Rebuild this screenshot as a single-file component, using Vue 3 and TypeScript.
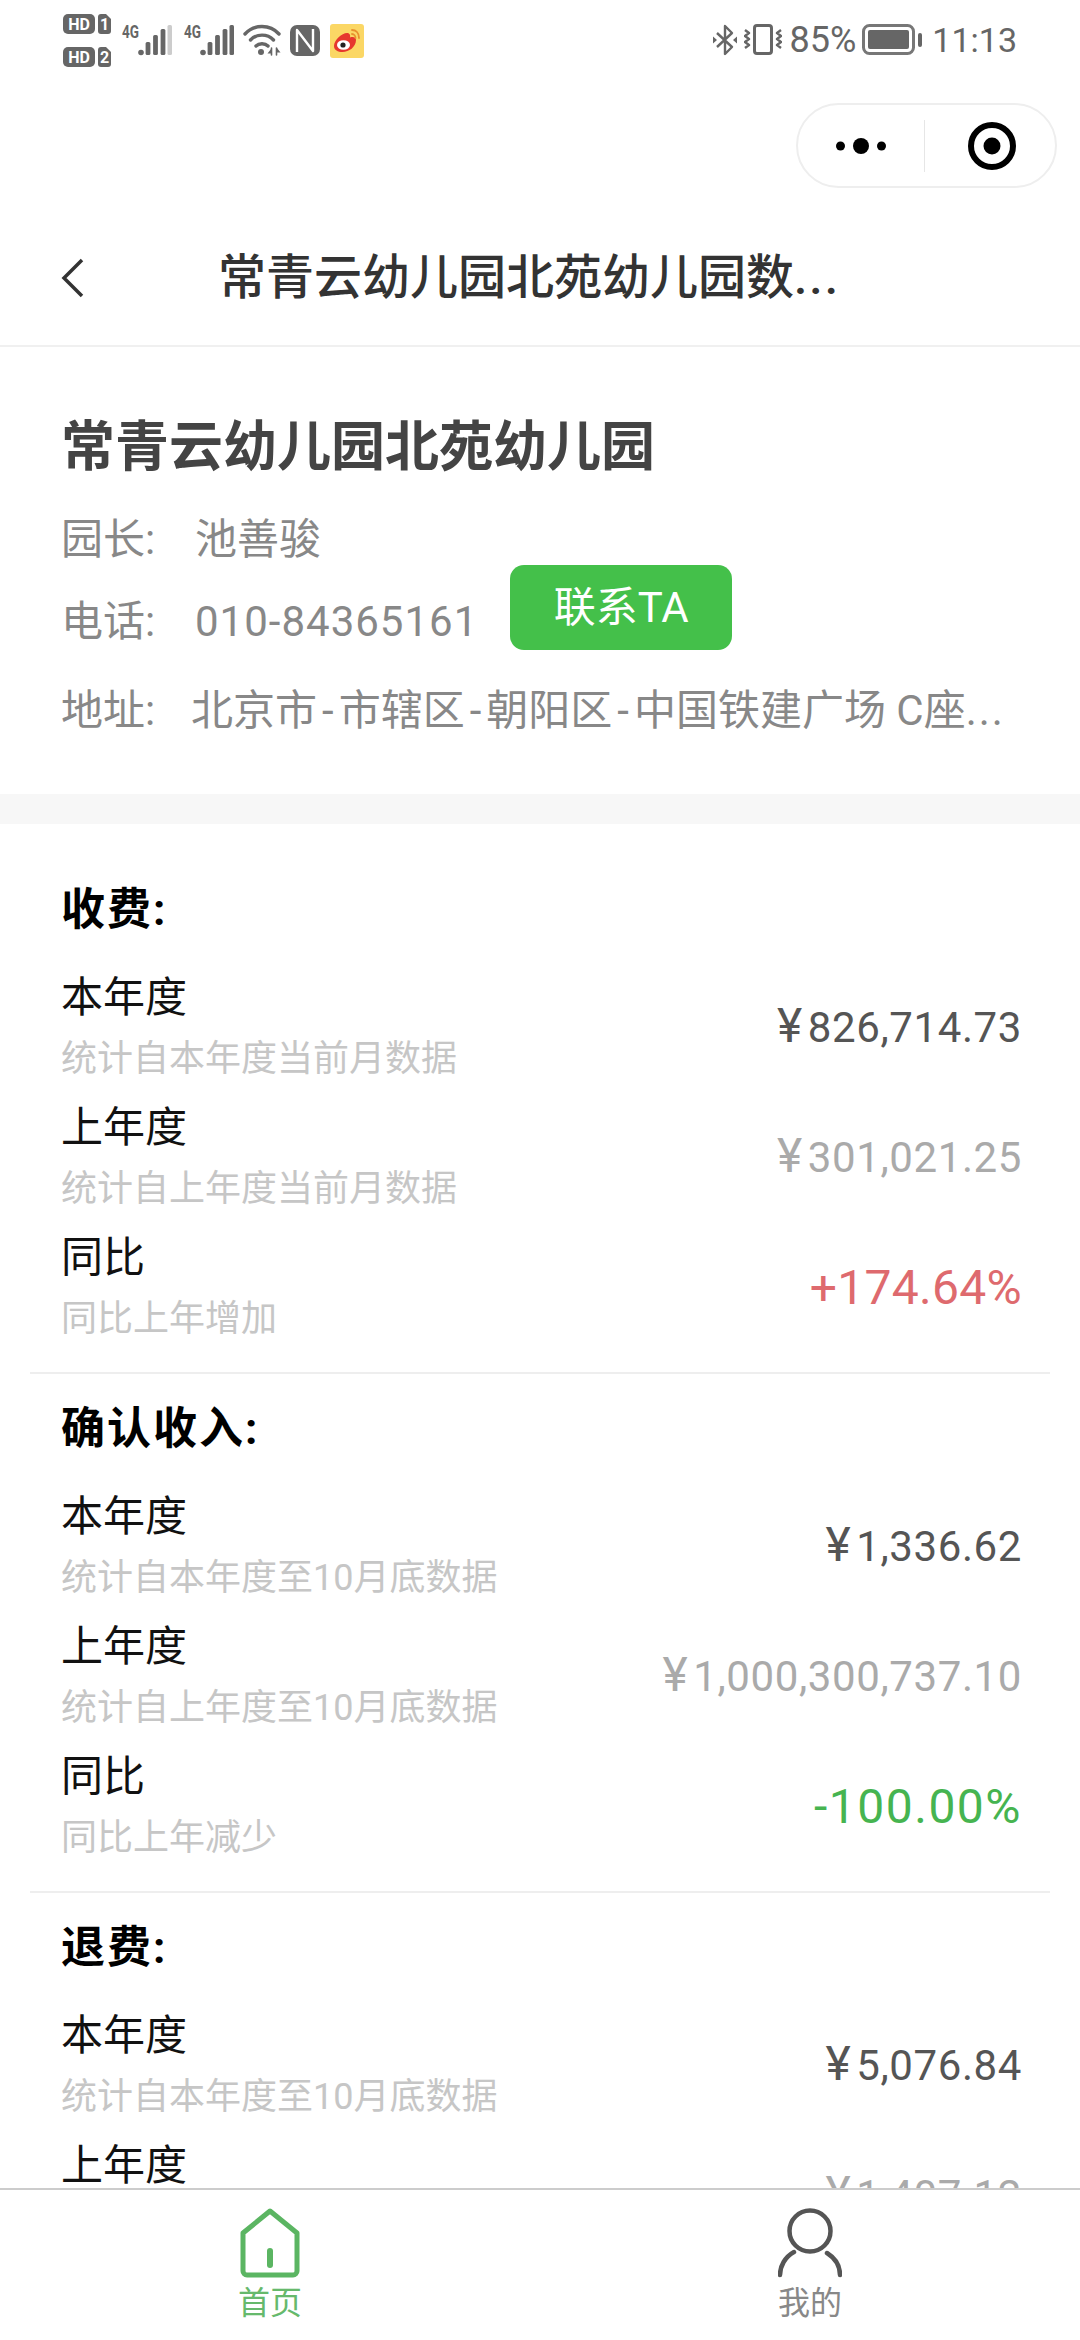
<script setup lang="ts">
interface Row {
  label: string
  sub: string
  value: string
  yen?: boolean
  kind?: 'muted' | 'up' | 'down'
}
interface Section {
  title: string
  rows: Row[]
}

const sections: Section[] = [
  {
    title: '收费:',
    rows: [
      { label: '本年度', sub: '统计自本年度当前月数据', value: '826,714.73', yen: true },
      { label: '上年度', sub: '统计自上年度当前月数据', value: '301,021.25', yen: true, kind: 'muted' },
      { label: '同比', sub: '同比上年增加', value: '+174.64%', kind: 'up' },
    ],
  },
  {
    title: '确认收入:',
    rows: [
      { label: '本年度', sub: '统计自本年度至10月底数据', value: '1,336.62', yen: true },
      { label: '上年度', sub: '统计自上年度至10月底数据', value: '1,000,300,737.10', yen: true, kind: 'muted' },
      { label: '同比', sub: '同比上年减少', value: '-100.00%', kind: 'down' },
    ],
  },
  {
    title: '退费:',
    rows: [
      { label: '本年度', sub: '统计自本年度至10月底数据', value: '5,076.84', yen: true },
      { label: '上年度', sub: '统计自上年度至10月底数据', value: '1,407.12', yen: true, kind: 'muted' },
    ],
  },
]

const signalBars = [
  { x: 26, y: 18, h: 13 },
  { x: 33.5, y: 11, h: 20 },
  { x: 41, y: 5, h: 26 },
]

const addressParts = ['北京市', '市辖区', '朝阳区', '中国铁建广场 C座']
</script>

<template>
  <div class="page">
    <div class="status">
      <div class="status-left">
        <div class="hd-stack">
          <svg v-for="n in 2" :key="n" width="48" height="20" viewBox="0 0 48 20">
            <rect x="0" y="0" width="32" height="20" rx="5" fill="#666" />
            <text x="16" y="15.5" class="hd-text" text-anchor="middle">HD</text>
            <path d="M35 3a3 3 0 0 1 3-3h5l5 5v12a3 3 0 0 1-3 3h-7a3 3 0 0 1-3-3z" fill="#666" />
            <text x="41.5" y="15.5" class="hd-text" text-anchor="middle">{{ n }}</text>
          </svg>
        </div>
        <svg v-for="n in 2" :key="'sig' + n" class="signal" width="50" height="32" viewBox="0 0 50 32">
          <text x="0" y="14" class="net-text" textLength="17" lengthAdjust="spacingAndGlyphs">4G</text>
          <circle cx="19" cy="28.5" r="2.8" fill="#666" />
          <rect v-for="b in signalBars" :key="b.x" :x="b.x - 2.4" :y="b.y" width="4.8" :height="b.h" rx="1.5" fill="#666" />
          <rect x="45.5" y="1" width="4.5" height="30" rx="1.5" :fill="n === 1 ? '#ccc' : '#666'" />
        </svg>
        <svg class="wifi" width="38" height="32" viewBox="0 0 38 32" fill="none" stroke="#666" stroke-width="3.4" stroke-linecap="round">
          <path d="M2 10C11 0 27 0 36 10" />
          <path d="M7.5 16C13.5 9.5 24.5 9.5 30.5 16" />
          <path d="M13 22c3-3 9-3 12 0" />
          <circle cx="18" cy="28" r="3" fill="#666" stroke="none" />
          <path d="M28.500 24v7M33.500 24v7" stroke-width="1.600" />
          <path d="M28 25l-3.500 4.500h4zM34 24l3.500 4.500h-4z" fill="#666" stroke="none" />
        </svg>
        <svg class="nfc" width="30" height="31" viewBox="0 0 30 31">
          <rect width="30" height="31" rx="7" fill="#666" />
          <path d="M7 27V5l16 21V4" fill="none" stroke="#fff" stroke-width="2.400" stroke-linejoin="round" />
        </svg>
        <svg class="weibo" width="34" height="34" viewBox="0 0 34 34">
          <rect width="34" height="34" rx="3" fill="#fbd765" />
          <path d="M4 22c0-6 8-13 13-13 3 0 3.500 2.500 3 4.500 3-1 6-.5 6 2.500C26 23 19 28 12.500 28 8 28 4 26 4 22z" fill="#e6372e" />
          <ellipse cx="13.500" cy="21" rx="6.500" ry="4.800" fill="#fff" />
          <circle cx="13" cy="21" r="2.600" fill="#222" />
          <path d="M22 6c4 0 7 3 7 8M22 10c2 0 3.500 2 3.500 4" fill="none" stroke="#e8912e" stroke-width="1.800" stroke-linecap="round" />
        </svg>
      </div>
      <div class="status-right">
        <svg width="24" height="32" viewBox="0 0 24 32" fill="none" stroke="#666" stroke-width="2.400" stroke-linejoin="round">
          <path d="M4 9l15 14-7 7V2l7 7L4 23" />
          <path d="M0 12.500l4 3.500-4 3.500zM24 12.500l-4 3.500 4 3.500z" fill="#666" stroke="none" />
        </svg>
        <svg class="vibrate" width="38" height="31" viewBox="0 0 38 31" fill="none" stroke="#666" stroke-width="2.400">
          <rect x="10.500" y="1.500" width="17" height="28" rx="2.500" stroke-width="3" />
          <path d="M1 6l4 3-4 3 4 3-4 3 4 3-4 3M37 6l-4 3 4 3-4 3 4 3-4 3 4 3" stroke-linejoin="round" />
        </svg>
        <span class="percent">85%</span>
        <svg class="battery" width="60" height="31" viewBox="0 0 60 31">
          <rect x="1.500" y="1.500" width="50" height="28" rx="6" fill="none" stroke="#777" stroke-width="3" />
          <rect x="6" y="6" width="41" height="19" rx="2" fill="#666" />
          <rect x="56" y="9" width="4" height="14" rx="2" fill="#666" />
        </svg>
        <span class="clock">11:13</span>
      </div>
    </div>

    <div class="capsule-row">
      <div class="capsule">
        <div class="capsule-cell">
          <svg width="50" height="18" viewBox="0 0 50 18" fill="#000">
            <circle cx="4.500" cy="9" r="4.500" />
            <circle cx="25" cy="9" r="8" />
            <circle cx="45.500" cy="9" r="4.500" />
          </svg>
        </div>
        <div class="capsule-line"></div>
        <div class="capsule-cell target">
          <svg width="48" height="48" viewBox="0 0 48 48">
            <circle cx="24" cy="24" r="21" fill="none" stroke="#000" stroke-width="6" />
            <circle cx="24" cy="24" r="8.500" fill="#000" />
          </svg>
        </div>
      </div>
    </div>

    <div class="nav">
      <svg class="back" width="24" height="40" viewBox="0 0 24 40" fill="none" stroke="#333" stroke-width="3.500">
        <path d="M21 2L3 20l18 18" />
      </svg>
      <div class="nav-title">常青云幼儿园北苑幼儿园数<span class="dots">...</span></div>
    </div>

    <div class="content">
      <div class="info">
        <div class="school">常青云幼儿园北苑幼儿园</div>
        <div class="info-row">
          <span class="info-label">园长:</span>
          <span>池善骏</span>
        </div>
        <div class="info-row phone">
          <span class="info-label">电话:</span>
          <span class="phone-num">010-84365161</span>
          <button class="contact">联系TA</button>
        </div>
        <div class="info-row address">
          <span class="address-label">地址:</span>
          <template v-for="(part, i) in addressParts" :key="part">
            <span v-if="i > 0" class="dash">-</span>{{ part }}
          </template><span class="dots">...</span>
        </div>
      </div>
      <div class="band"></div>

      <div class="stats">
        <section v-for="section in sections" :key="section.title" class="section">
          <h3 class="section-title">{{ section.title }}</h3>
          <div class="rows">
            <div v-for="row in section.rows" :key="row.label" class="row">
              <div>
                <div class="row-label">{{ row.label }}</div>
                <div class="row-sub">{{ row.sub }}</div>
              </div>
              <div class="row-value" :class="row.kind">
                <span v-if="row.yen" class="yen">¥</span>{{ row.value }}
              </div>
            </div>
          </div>
        </section>
      </div>
    </div>

    <div class="tabbar">
      <div class="tab active">
        <svg width="60" height="70" viewBox="0 0 60 70" fill="none" stroke="#5bb562" stroke-width="5" stroke-linejoin="round" stroke-linecap="round">
          <path d="M30 3L57 25V63a4 4 0 0 1-4 4H7a4 4 0 0 1-4-4V25z" />
          <path d="M30 43V57" stroke-width="6" />
        </svg>
        <span>首页</span>
      </div>
      <div class="tab">
        <svg width="64" height="70" viewBox="0 0 64 70" fill="none" stroke="#555" stroke-width="4.500" stroke-linecap="round">
          <circle cx="32" cy="23" r="20.500" />
          <path d="M16 44C7 49 2 58 2 67" />
          <path d="M49 45C57 50 62 58 62 67" />
        </svg>
        <span>我的</span>
      </div>
    </div>
  </div>
</template>

<style scoped>
.page {
  display: flex;
  flex-direction: column;
  width: 1080px;
  height: 2340px;
  overflow: hidden;
  background: #fff;
  font-family: Roboto, "Noto Sans CJK SC", sans-serif;
}

.status {
  display: flex;
  justify-content: space-between;
  height: 80px;
  padding: 14px 63px 0 63px;
  box-sizing: border-box;
  color: #666;
}
.status-left,
.status-right {
  display: flex;
  align-items: flex-start;
}
.hd-stack {
  display: flex;
  flex-direction: column;
  gap: 13px;
  width: 48px;
}
.hd-stack svg,
.signal {
  overflow: visible;
}
.hd-text {
  font: 700 16px Roboto, sans-serif;
  fill: #fff;
}
.net-text {
  font: 700 18px Roboto, sans-serif;
  fill: #666;
}
.signal {
  margin: 10px 0 0 11px;
}
.signal + .signal {
  margin-left: 12px;
}
.wifi {
  margin: 10px 0 0 9px;
}
.nfc {
  margin: 11px 0 0 9px;
}
.weibo {
  margin: 10px 0 0 10px;
}
.status-right {
  padding-top: 10px;
}
.vibrate {
  margin-left: 7px;
}
.percent {
  margin-left: 7px;
  font-size: 36px;
  line-height: 32px;
}
.battery {
  margin-left: 6px;
}
.clock {
  margin-left: 10px;
  font-size: 34px;
  line-height: 32px;
}

.capsule-row {
  display: flex;
  justify-content: flex-end;
  padding: 23px 23px 0 0;
}
.capsule {
  display: flex;
  align-items: center;
  width: 261px;
  height: 85px;
  box-sizing: border-box;
  border: 2px solid #eee;
  border-radius: 43px;
}
.capsule-cell {
  display: flex;
  flex: 1;
  justify-content: center;
}
.capsule-cell.target {
  padding-left: 5px;
}
.capsule-line {
  width: 1px;
  height: 52px;
  background: #e6e6e6;
}

.nav {
  display: flex;
  align-items: center;
  height: 159px;
  padding: 22px 0 0 61px;
  box-sizing: border-box;
  border-bottom: 2px solid #f0f0f0;
}
.back {
  flex-shrink: 0;
}
.nav-title {
  margin-left: 133px;
  color: #333;
  font-size: 48px;
  font-weight: 500;
  line-height: 76px;
  white-space: nowrap;
}
.dots {
  letter-spacing: 2px;
}

.content {
  flex: 1;
  min-height: 0;
  overflow: hidden;
}

.info {
  padding: 63px 61px 56px;
  color: #888;
  font-size: 42px;
}
.school {
  margin-bottom: 27px;
  color: #444;
  font-size: 54px;
  font-weight: 700;
  line-height: 76px;
}
.info-row {
  display: flex;
  line-height: 53px;
}
.info-label {
  width: 134px;
}
.phone {
  align-items: flex-end;
  height: 85px;
  margin-top: -1px;
}
.phone-num {
  margin-bottom: 2px;
  letter-spacing: 1px;
}
.phone .info-label {
  margin-bottom: 2px;
}
.contact {
  width: 222px;
  height: 85px;
  margin-left: 32px;
  border: none;
  border-radius: 14px;
  background: #44c04a;
  color: #fff;
  font: inherit;
  font-size: 42px;
}
.address {
  display: block;
  margin-top: 33px;
  line-height: 55px;
  white-space: nowrap;
}
.address-label {
  display: inline-block;
  width: 130px;
}
.dash {
  padding: 0 5px;
}
.band {
  height: 30px;
  background: #f7f7f7;
}

.stats {
  padding: 56px 30px 0;
}
.section + .section {
  margin-top: 25px;
}
.section {
  padding-bottom: 22px;
  border-bottom: 2px solid #eee;
}
.section-title {
  margin: 0 0 24px;
  padding-left: 31px;
  color: #000;
  font-size: 44px;
  font-weight: 700;
  letter-spacing: 2px;
  line-height: 60px;
}
.rows {
  display: flex;
  flex-direction: column;
  gap: 4px;
}
.row {
  display: flex;
  justify-content: space-between;
  align-items: center;
  padding: 0 28px 0 31px;
}
.row-label {
  padding-top: 3px;
  color: #111;
  font-size: 42px;
  line-height: 62px;
}
.row-sub {
  color: #c6c6c6;
  font-size: 36px;
  line-height: 61px;
}
.row-value {
  color: #555;
  font-size: 42px;
  letter-spacing: 0.6px;
}
.yen {
  margin-right: 5px;
  font-size: 48px;
  line-height: 1;
}
.row-value.muted {
  color: #aaa;
}
.row-value.up {
  color: #de6a6e;
  font-size: 48px;
  letter-spacing: 0.3px;
}
.row-value.down {
  color: #46b450;
  font-size: 48px;
  letter-spacing: 1.5px;
}

.tabbar {
  display: flex;
  flex-shrink: 0;
  height: 152px;
  box-sizing: border-box;
  padding-top: 18px;
  border-top: 2px solid #ccc;
  background: #fff;
}
.tab {
  display: flex;
  flex: 1;
  flex-direction: column;
  align-items: center;
  color: #888;
  font-size: 32px;
  line-height: 40px;
}
.tab span {
  margin-top: 5px;
}
.tab.active {
  color: #66b96c;
}
</style>
